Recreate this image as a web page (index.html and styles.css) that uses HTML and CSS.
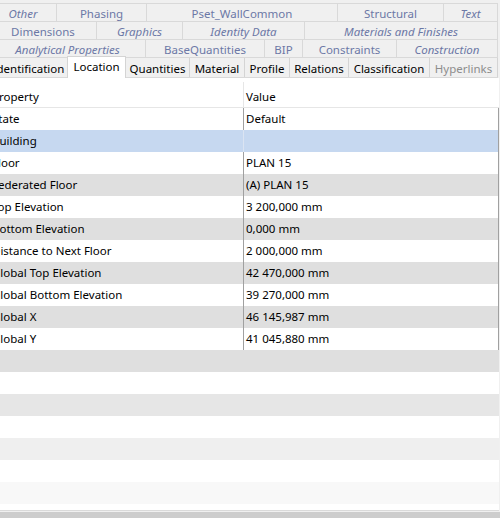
FILE: index.html
```html
<!DOCTYPE html>
<html lang="en">
<head>
  <meta charset="UTF-8" />
  <title>Properties</title>
  <link rel="stylesheet" href="styles.css">
</head>
<body>

  <div class="panel">
    <div class="tabs">
      <div class="tab-row row1">
        <div class="tab italic">Other</div>
        <div class="tab">Phasing</div>
        <div class="tab">Pset_WallCommon</div>
        <div class="tab">Structural</div>
        <div class="tab italic">Text</div>
      </div>
      <div class="tab-row row2">
        <div class="tab">Dimensions</div>
        <div class="tab italic">Graphics</div>
        <div class="tab italic">Identity Data</div>
        <div class="tab italic">Materials and Finishes</div>
      </div>
      <div class="tab-row row3">
        <div class="tab italic">Analytical Properties</div>
        <div class="tab">BaseQuantities</div>
        <div class="tab">BIP</div>
        <div class="tab">Constraints</div>
        <div class="tab italic">Construction</div>
      </div>
      <div class="tab-row row4">
        <div class="tab">Identification</div>
        <div class="tab active">Location</div>
        <div class="tab">Quantities</div>
        <div class="tab">Material</div>
        <div class="tab">Profile</div>
        <div class="tab">Relations</div>
        <div class="tab">Classification</div>
        <div class="tab disabled">Hyperlinks</div>
      </div>
    </div>

    <div class="grid">
      <div class="head">
        <div class="cell">Property</div>
        <div class="cell">Value</div>
      </div>
      <div class="row"><div class="cell">State</div><div class="cell">Default</div></div>
      <div class="row category"><div class="cell">Building</div><div class="cell"></div></div>
      <div class="row"><div class="cell">Floor</div><div class="cell">PLAN 15</div></div>
      <div class="row alt"><div class="cell">Federated Floor</div><div class="cell">(A) PLAN 15</div></div>
      <div class="row"><div class="cell">Top Elevation</div><div class="cell">3 200,000 mm</div></div>
      <div class="row alt"><div class="cell">Bottom Elevation</div><div class="cell">0,000 mm</div></div>
      <div class="row"><div class="cell">Distance to Next Floor</div><div class="cell">2 000,000 mm</div></div>
      <div class="row alt"><div class="cell">Global Top Elevation</div><div class="cell">42 470,000 mm</div></div>
      <div class="row"><div class="cell">Global Bottom Elevation</div><div class="cell">39 270,000 mm</div></div>
      <div class="row alt"><div class="cell">Global X</div><div class="cell">46 145,987 mm</div></div>
      <div class="row"><div class="cell">Global Y</div><div class="cell">41 045,880 mm</div></div>

      <div class="empty e1"></div>
      <div class="empty"></div>
      <div class="empty e2"></div>
      <div class="empty"></div>
      <div class="empty e3"></div>
      <div class="empty"></div>
      <div class="empty e4"></div>
      <div class="empty tail"></div>
    </div>

    <div class="hscroll"></div>
  </div>

</body>
</html>
```

FILE: styles.css
```css
body {
  margin: 0;
  background-color: #f0f0f0;
  font-family: "Noto Sans", "Open Sans", sans-serif;
  font-size: 11.5px;
  color: #000;
  overflow: hidden;
}
.panel {
  margin-left: -10px;
  width: 510px;
  padding-top: 3px;
}

/* tab strip */
.tab-row {
  display: grid;
  height: 18px;
  border-top: 1px solid #d9d9d9;
  box-sizing: border-box;
  width: 508px;
}
.row1 { grid-template-columns: 67px 90px 191px 106px 54px; }
.row2 { grid-template-columns: 107px 86px 122px 193px; }
.row3 { grid-template-columns: 156px 119px 38px 94px 101px; }
.row4 {
  grid-template-columns: 78px 58px 64px 55px 45px 59px 81px 68px;
  border-bottom: 1px solid #d9d9d9;
  height: 21px;
}
.tab {
  border-right: 1px solid #d9d9d9;
  text-align: center;
  line-height: 17px;
  padding-top: 1px;
  color: #6c78a6;
  white-space: nowrap;
  overflow: hidden;
}
.tab.italic {
  font-style: italic;
}
.row4 .tab {
  color: #000;
  line-height: 19px;
  border-color: #d4d4d4;
}
.row4 .tab.disabled {
  color: #8d8d8d;
}
.row4 .tab.active {
  background: #fff;
  border-left: 1px solid #d4d4d4;
  border-top: 1px solid #d4d4d4;
  margin-top: -2px;
  margin-left: -1px;
  margin-bottom: -1px;
  padding-top: 0;
  position: relative;
}

/* property grid */
.grid {
  width: 509px;
  background: #fff;
}
.head, .row {
  display: grid;
  grid-template-columns: 254px 255px;
}
.head {
  height: 30px;
  border-bottom: 1px solid #e6e6e6;
  box-sizing: border-box;
}
.head .cell {
  padding: 8px 0 0 2px;
}
.head .cell:first-child {
  border-right: 1px solid #e6e6e6;
  margin: 4px 0 0;
  padding-top: 4px;
}
.row {
  height: 22px;
}
.cell {
  padding-left: 2px;
  line-height: 22px;
  white-space: nowrap;
}
.row .cell:first-child {
  border-right: 1px solid #a0a0a0;
}
.row .cell:last-child {
  border-right: 1px solid #a0a0a0;
}
.row.alt {
  background: #dfdfdf;
}
.row.category {
  background: #c6d8f0;
}
.row.category .cell:first-child {
  border-right-color: #dbe4f2;
}

.empty {
  height: 22px;
}
.empty.e1 { background: #dfdfdf; }
.empty.e2 { background: #e6e6e6; }
.empty.e3 { background: #efefef; }
.empty.e4 { background: #f8f8f8; }
.empty.tail {
  height: 6px;
  border-bottom: 1px solid #dadada;
}

.hscroll {
  margin-top: 1px;
  height: 8px;
  background: #cdcdcd;
}
```
